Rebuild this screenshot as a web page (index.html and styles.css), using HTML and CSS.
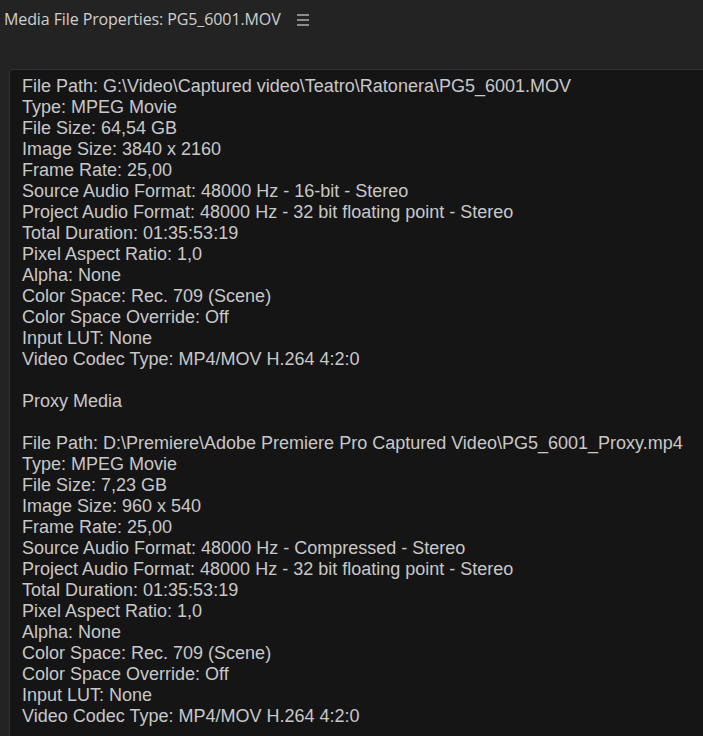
FILE: index.html
```html
<!DOCTYPE html>
<html lang="en">
<head>
  <meta charset="UTF-8" />
  <title>Media File Properties</title>
  <link rel="stylesheet" href="styles.css">
</head>
<body>
<div class="panel-header">
  <span class="panel-title">Media File Properties: PG5_6001.MOV</span>
  <span class="panel-menu"><i></i><i></i><i></i></span>
</div>

<div class="props">
  <div>File Path: G:\Video\Captured video\Teatro\Ratonera\PG5_6001.MOV</div>
  <div>Type: MPEG Movie</div>
  <div>File Size: 64,54 GB</div>
  <div>Image Size: 3840 x 2160</div>
  <div>Frame Rate: 25,00</div>
  <div>Source Audio Format: 48000 Hz - 16-bit - Stereo</div>
  <div>Project Audio Format: 48000 Hz - 32 bit floating point - Stereo</div>
  <div>Total Duration: 01:35:53:19</div>
  <div>Pixel Aspect Ratio: 1,0</div>
  <div>Alpha: None</div>
  <div>Color Space: Rec. 709 (Scene)</div>
  <div>Color Space Override: Off</div>
  <div>Input LUT: None</div>
  <div>Video Codec Type: MP4/MOV H.264 4:2:0</div>
  <div class="blank"></div>
  <div>Proxy Media</div>
  <div class="blank"></div>
  <div>File Path: D:\Premiere\Adobe Premiere Pro Captured Video\PG5_6001_Proxy.mp4</div>
  <div>Type: MPEG Movie</div>
  <div>File Size: 7,23 GB</div>
  <div>Image Size: 960 x 540</div>
  <div>Frame Rate: 25,00</div>
  <div>Source Audio Format: 48000 Hz - Compressed - Stereo</div>
  <div>Project Audio Format: 48000 Hz - 32 bit floating point - Stereo</div>
  <div>Total Duration: 01:35:53:19</div>
  <div>Pixel Aspect Ratio: 1,0</div>
  <div>Alpha: None</div>
  <div>Color Space: Rec. 709 (Scene)</div>
  <div>Color Space Override: Off</div>
  <div>Input LUT: None</div>
  <div>Video Codec Type: MP4/MOV H.264 4:2:0</div>
</div>
</body>
</html>
```

FILE: styles.css
```css
html, body {
  margin: 0;
  height: 100%;
  overflow: hidden;
}

body {
  background: #232323;
  color: #c8c8c8;
  font-family: 'Liberation Sans', Arial, sans-serif;
}

.panel-header {
  display: flex;
  align-items: center;
  height: 38px;
  padding-left: 4px;
}
.panel-title {
  font-family: 'Open Sans', 'Noto Sans', sans-serif;
  font-size: 16px;
  letter-spacing: -0.1px;
  color: #cfcfcf;
}
.panel-menu {
  display: flex;
  flex-direction: column;
  gap: 3px;
  margin-left: 16px;
  margin-top: 1px;
}
.panel-menu i {
  display: block;
  width: 12px;
  height: 2px;
  background: #8a8a8a;
}

.props {
  margin: 31px 0 0 9px;
  padding: 6px 0 0 12px;
  background: #151515;
  border: 1px solid #313131;
  border-right: none;
  border-bottom: none;
  border-radius: 4px 0 0 0;
  font-size: 18px;
  line-height: 21px;
  height: 700px;
}
.props .blank {
  height: 21px;
}
```
